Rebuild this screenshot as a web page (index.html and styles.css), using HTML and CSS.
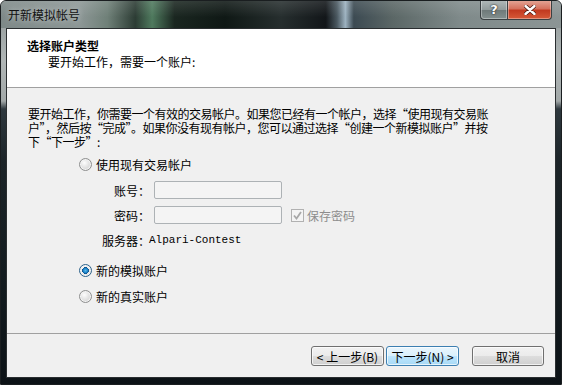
FILE: index.html
```html
<!DOCTYPE html>
<html lang="zh-CN">
<head>
<meta charset="UTF-8">
<title>开新模拟帐号</title>
<link rel="stylesheet" href="styles.css">
</head>
<body>
<div class="window">
    <div class="titlebar">
        <span class="title">开新模拟帐号</span>
        <div class="controls">
            <span class="ctl help">?</span>
            <span class="ctl close">
                <svg width="12" height="10" viewBox="0 0 12 10">
                    <path d="M1.5 1 L10.5 9 M10.5 1 L1.5 9" stroke="#4a1a10" stroke-width="4" stroke-linecap="round"/>
                    <path d="M1.5 1 L10.5 9 M10.5 1 L1.5 9" stroke="#fff" stroke-width="2.4" stroke-linecap="round"/>
                </svg>
            </span>
        </div>
    </div>

    <div class="client">
        <div class="header">
            <div class="head-title">选择账户类型</div>
            <div class="head-sub">要开始工作，需要一个账户:</div>
        </div>

        <div class="body">
            <p class="intro">
                <span class="line">要开始工作，你需要一个有效的交易帐户。如果您已经有一个帐户，选择“使用现有交易账</span>
                <span class="line">户”，然后按“完成”。如果你没有现有帐户，您可以通过选择“创建一个新模拟账户”并按</span>
                <span class="line">下“下一步”:</span>
            </p>

            <div class="radio-row"><span class="radio"></span>使用现有交易帐户</div>

            <div class="login">
                <span class="lbl">账号：</span>
                <span class="field"></span>
                <span></span>
                <span class="lbl">密码：</span>
                <span class="field"></span>
                <span class="check-row">
                    <span class="check">
                        <svg width="9" height="9" viewBox="0 0 9 9"><path d="M1 4.5 L3.5 7.5 L8 1" fill="none" stroke="#a8a8a8" stroke-width="1.8"/></svg>
                    </span>保存密码
                </span>
                <span class="lbl">服务器：</span>
                <span class="server">Alpari-Contest</span>
            </div>

            <div class="radio-row demo"><span class="radio on"></span>新的模拟账户</div>
            <div class="radio-row"><span class="radio"></span>新的真实账户</div>
        </div>

        <div class="footer">
            <button class="btn">&lt;&nbsp;上一步(B)</button>
            <button class="btn default">下一步(N)&nbsp;&gt;</button>
            <button class="btn cancel">取消</button>
        </div>
    </div>
</div>
</body>
</html>
```

FILE: styles.css
```css
body {
    margin: 0;
    font-family: "Noto Sans CJK SC", "Noto Sans", sans-serif;
    font-size: 12px;
    color: #000;
}
.window {
    width: 562px;
    height: 385px;
    box-sizing: border-box;
    display: flex;
    flex-direction: column;
    border: 1px solid #1a1e20;
    border-radius: 6px 6px 0 0;
    overflow: hidden;
    background: linear-gradient(to bottom, #8d9696 0, #b0b6b6 60px, #a2a8a8 100px, #2e383e 108px, #1c2428 160px, #121a1e 300px, #0c1216 100%);
}

/* glass title bar */
.titlebar {
    height: 27px;
    display: flex;
    align-items: flex-start;
    padding-left: 7px;
    background:
        linear-gradient(to bottom, rgba(255, 255, 255, 0.12), rgba(255, 255, 255, 0) 60%),
        linear-gradient(90deg, #7e8988 0%, #8d9796 14%, #6f8078 19%, #2c3c34 24%, #4f7a5e 27%, #1a2620 31%, #0f1815 40%, #262e2e 50%, #121619 58%, #4a5860 60%, #9db2c0 61.5%, #3c4a52 63%, #5b6766 70%, #7f8a8a 82%, #8c9595 100%);
}
.title {
    line-height: 27px;
    color: #111;
    text-shadow: 0 0 6px rgba(255, 255, 255, 0.6);
}
.controls {
    margin-left: auto;
    margin-right: 9px;
    margin-top: -1px;
    display: flex;
}
.ctl {
    height: 19px;
    display: flex;
    align-items: center;
    justify-content: center;
    border: 1px solid #3a4042;
    border-top: none;
    box-shadow: inset 0 0 0 1px rgba(255, 255, 255, 0.35);
}
.help {
    width: 26px;
    border-radius: 0 0 0 4px;
    border-right: none;
    background: linear-gradient(to bottom, #b2baba 0%, #929c9c 50%, #6d7878 51%, #84908f 100%);
    color: #fff;
    font-family: "DejaVu Sans", sans-serif;
    font-weight: bold;
    font-size: 13px;
    text-shadow: 0 0 2px #333, 0 0 1px #000;
}
.close {
    width: 43px;
    border-radius: 0 0 4px 0;
    background: linear-gradient(to bottom, #e5a899 0%, #d5725e 45%, #c23a20 55%, #d65a38 100%);
}

/* client area */
.client {
    flex: 1;
    margin: 0 5px 6px 5px;
    border: 1px solid #2a2e30;
    background: #f0f0f0;
    display: flex;
    flex-direction: column;
}
.header {
    height: 59px;
    box-sizing: border-box;
    padding: 9px 0 0 20px;
    background: #fff;
    border-bottom: 1px solid #a0a0a0;
    line-height: 16px;
}
.head-title {
    font-weight: bold;
}
.head-sub {
    padding-left: 21px;
}
.body {
    flex: 1;
    padding-left: 21px;
}
.intro {
    margin: 19px 0 7px 0;
    letter-spacing: -0.5px;
    display: flex;
    flex-direction: column;
}
.line {
    height: 14px;
    line-height: 14px;
    white-space: nowrap;
}
.radio-row {
    display: flex;
    align-items: center;
    height: 16px;
    padding-left: 51px;
}
.radio {
    width: 11px;
    height: 11px;
    border-radius: 50%;
    border: 1px solid #8e8f8f;
    margin-right: 4px;
    background: radial-gradient(circle at 40% 35%, #fdfdfd 0%, #e4e4e4 45%, #c8c8c8 100%);
    box-shadow: inset 0 0 0 1px #f4f4f4;
}
.radio.on {
    border-color: #2c628b;
    background:
        radial-gradient(circle at 50% 50%, #56b9ec 0%, #1a7fc4 30%, #0c4f88 42%, rgba(0, 0, 0, 0) 45%),
        radial-gradient(circle at 40% 35%, #fdfdfd 0%, #e4e4e4 60%, #c8c8c8 100%);
}
.login {
    display: grid;
    grid-template-columns: 54px 128px auto;
    grid-auto-rows: 18px;
    column-gap: 4px;
    row-gap: 7px;
    align-items: center;
    margin: 9px 0 13px 68px;
}
.lbl {
    text-align: right;
    white-space: nowrap;
}
.field {
    height: 18px;
    box-sizing: border-box;
    border: 1px solid #adb2b5;
    border-radius: 2px;
    background: #f4f4f4;
}
.check-row {
    display: flex;
    align-items: center;
    margin-left: 5px;
    color: #8d8d8d;
}
.check {
    width: 11px;
    height: 11px;
    border: 1px solid #b1b1b1;
    background: #f4f4f4;
    display: flex;
    align-items: center;
    justify-content: center;
    margin-right: 3px;
}
.server {
    grid-column: 2 / 4;
    margin-left: -5px;
    font-family: "Liberation Mono", monospace;
    font-size: 11px;
}
.demo {
    margin-bottom: 10px;
}

/* bottom button bar */
.footer {
    height: 44px;
    box-sizing: border-box;
    border-top: 1px solid #a0a0a0;
    display: flex;
    justify-content: flex-end;
    padding: 12px 11px 0 0;
}
.btn {
    width: 73px;
    height: 20px;
    padding: 0;
    font-family: inherit;
    font-size: 12px;
    color: #000;
    border: 1px solid #707070;
    border-radius: 3px;
    background: linear-gradient(to bottom, #f2f2f2 0%, #ebebeb 50%, #dddddd 51%, #cfcfcf 100%);
    box-shadow: inset 0 0 0 1px rgba(255, 255, 255, 0.7);
}
.default {
    margin-left: 2px;
    border-color: #3c7fb1;
    background: linear-gradient(to bottom, #eaf6fd 0%, #d9f0fc 50%, #bee6fd 51%, #a7d9f5 100%);
}
.cancel {
    margin-left: 13px;
    width: 72px;
}
```
